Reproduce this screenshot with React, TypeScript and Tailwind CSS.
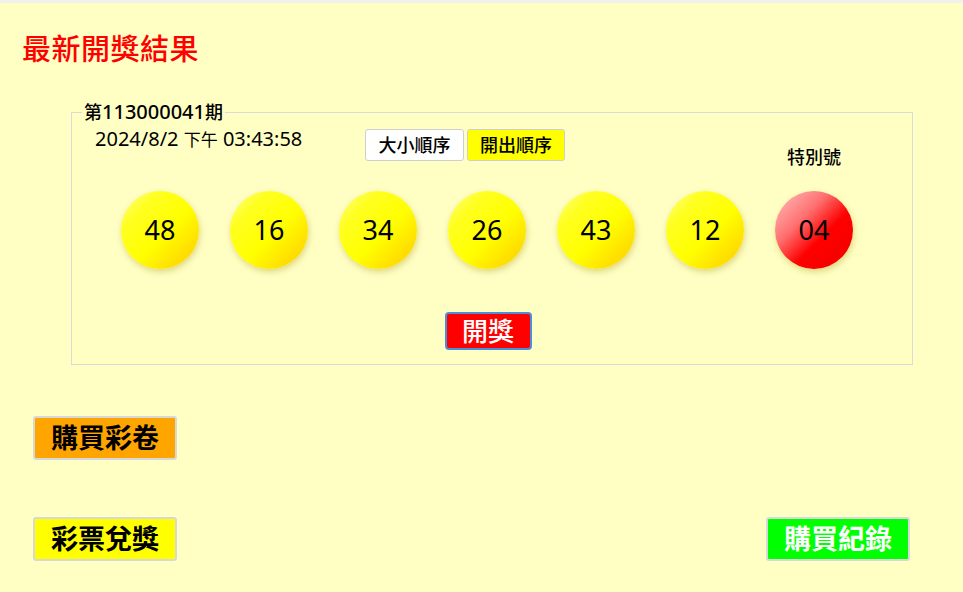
import React from "react";

const FONT = { fontFamily: '"Noto Sans", "Noto Sans CJK TC", sans-serif' };

function Ball({ n, special }: { n: string; special?: boolean }) {
  return (
    <div
      className={`flex h-[78px] w-[78px] items-center justify-center rounded-full text-[27px] text-black shadow-[1px_3px_6px_rgba(160,140,0,0.35)] ${
        special
          ? "bg-[linear-gradient(135deg,#ffc4c4_0%,#ff7070_35%,#ff0000_60%,#f00000_100%)]"
          : "bg-[linear-gradient(135deg,#ffff90_0%,#ffff20_25%,#ffff00_55%,#ffc800_100%)]"
      }`}
    >
      {n}
    </div>
  );
}

export default function App() {
  const nums = ["48", "16", "34", "26", "43", "12"];
  return (
    <div className="min-h-[592px] w-[963px] bg-[#ffffc4] text-black" style={FONT}>
      <div className="h-[3px] bg-[#f0f0f0]" />
      <div className="pl-[22px] pt-[27px] text-[29px] leading-[38px] tracking-[0.5px] font-medium text-[#ff0000]">
        最新開獎結果
      </div>
      <fieldset className="ml-[71px] mr-[50px] mt-[33px] h-[264px] border border-[#dadada] px-0 pb-0">
        <legend className="ml-[10px] px-[2px] text-[20px] leading-[22px] font-medium">
          <span className="text-[18px]">第</span>113000041<span className="text-[18px]">期</span>
        </legend>
        <div className="flex items-start">
          <div className="ml-[23px] mt-[3px] w-[215px] text-[20px] leading-[26px]">
            2024/8/2 <span className="text-[17px]">下午</span> 03:43:58
          </div>
          <div className="ml-[55px] mt-[6px] flex gap-[3px]">
            <button className="h-[32px] w-[99px] rounded-[3px] border border-[#cfcfcf] bg-white text-[18px] leading-[24px] font-medium">
              大小順序
            </button>
            <button className="h-[32px] w-[98px] rounded-[3px] border border-[#cfcfcf] bg-[#ffff00] text-[18px] leading-[24px] font-medium">
              開出順序
            </button>
          </div>
        </div>
        <div className="ml-[49px] mt-[-17px] flex gap-[31px]">
          {nums.map((n) => (
            <div key={n} className="flex flex-col items-center">
              <div className="h-[26px]" />
              <div className="mt-[21px]">
                <Ball n={n} />
              </div>
            </div>
          ))}
          <div className="flex flex-col items-center">
            <div className="h-[26px] whitespace-nowrap text-[18px] leading-[26px] font-medium">特別號</div>
            <div className="mt-[21px]">
              <Ball n="04" special />
            </div>
          </div>
        </div>
        <div className="mt-[43px] flex justify-center pr-[8px]">
          <button className="h-[38px] w-[87px] rounded-[4px] border-2 border-[#4a90d9] bg-[#ff0000] text-[26px] leading-[30px] font-medium text-white">
            開獎
          </button>
        </div>
      </fieldset>
      <div className="ml-[33px] mt-[51px]">
        <button className="h-[44px] w-[144px] rounded-[3px] border-2 border-[#d8d8d8] bg-[#ffa500] text-[27px] leading-[34px] font-bold">
          購買彩卷
        </button>
      </div>
      <div className="ml-[33px] mr-[53px] mt-[57px] flex justify-between">
        <button className="h-[44px] w-[144px] rounded-[3px] border-2 border-[#d8d8d8] bg-[#ffff00] text-[27px] leading-[34px] font-bold">
          彩票兌獎
        </button>
        <button className="h-[44px] w-[144px] rounded-[3px] border-2 border-[#d8d8d8] bg-[#00ff00] text-[27px] leading-[34px] font-bold text-white">
          購買紀錄
        </button>
      </div>
    </div>
  );
}
